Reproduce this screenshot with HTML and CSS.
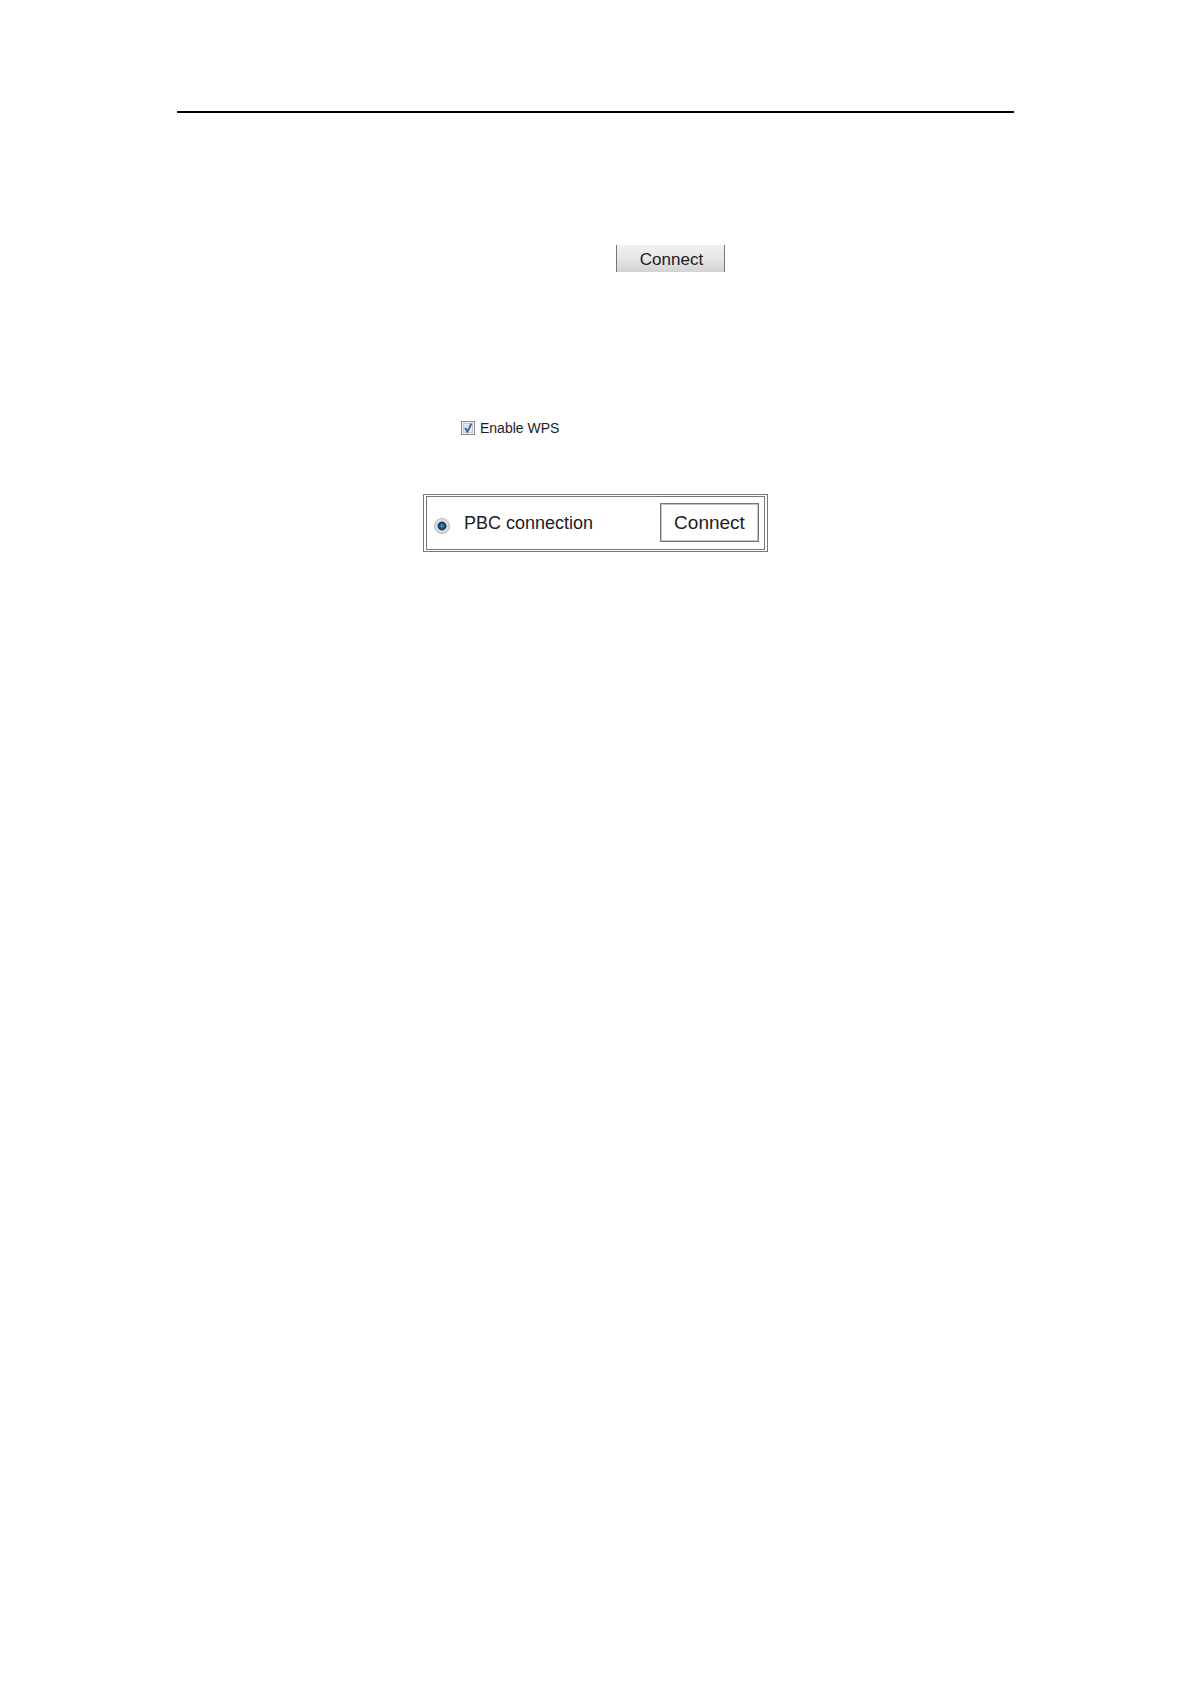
FILE: index.html
```html
<!DOCTYPE html>
<html lang="en">
<head>
    <meta charset="UTF-8">
    <meta name="viewport" content="width=device-width, initial-scale=1.0">
    <title>WPS</title>
    <link rel="stylesheet" href="styles.css">
</head>
<body>
    <main class="page">
        <hr class="rule">
        <form class="wps-form">
            <button type="button" class="btn btn-top">Connect</button>

            <div class="enable-row">
                <input type="checkbox" id="enableWps" class="check" checked>
                <label for="enableWps">Enable WPS</label>
            </div>

            <!-- PBC connection -->
            <div class="pbc-box">
                <input type="radio" id="pbc" name="mode" class="radio" checked>
                <label for="pbc">PBC connection</label>
                <button type="button" class="btn btn-pbc">Connect</button>
            </div>
        </form>
    </main>
</body>
</html>
```

FILE: styles.css
```css
* {
    box-sizing: border-box;
}
body {
    margin: 0;
    background: #fff;
    color: #1c1c24;
    font-family: "Liberation Sans", Arial, sans-serif;
}
.page {
    padding: 111px 177px;
}
.rule {
    height: 2px;
    margin: 0;
    border: none;
    background: #000;
}
.wps-form {
    display: flex;
    flex-direction: column;
    max-width: 345px;
    margin: 132px auto 0;
}
.btn {
    padding: 0;
    color: inherit;
    font-family: inherit;
    cursor: pointer;
}
.btn-top {
    width: 109px;
    height: 27px;
    margin-left: 193px;
    padding: 2px 0 0 2px;
    border: solid #777;
    border-width: 0 1px;
    background: linear-gradient(#f1f1f1, #e6e6e6 50%, #d2d2d2);
    font-size: 17px;
    line-height: 24px;
}
.enable-row {
    display: flex;
    align-items: center;
    gap: 5px;
    margin: 148px 0 58px 38px;
    font-size: 14px;
    line-height: 16px;
}
.check {
    appearance: none;
    width: 14px;
    height: 14px;
    margin: 0;
    border: 1px solid #8b8c90;
    background: #f0f1f4 url("data:image/svg+xml,%3Csvg xmlns='http://www.w3.org/2000/svg' viewBox='0 0 12 12'%3E%3Crect x='1.5' y='1.5' width='9' height='9' fill='%23dfe5ee' stroke='%23c3c8d0'/%3E%3Cpath d='M3 6l2.4 3.6L9.4 1.6' fill='none' stroke='%23445f9c' stroke-width='1.9'/%3E%3C/svg%3E") center / 12px 12px no-repeat;
}
.pbc-box {
    display: flex;
    align-items: center;
    height: 58px;
    padding: 0 5px 2px 7px;
    border: double #777;
    border-width: 3px 4px;
    font-size: 18px;
    line-height: 20px;
}
.pbc-box label {
    padding-top: 2px;
}
.radio {
    appearance: none;
    width: 16px;
    height: 16px;
    margin: 8px 14px 0 0;
    border: 1px solid #b4b4b4;
    border-radius: 50%;
    background: radial-gradient(circle, #5cb0d0 0, #1f5f88 2px, #163a57 4px, #f4f4f4 5px, #d4d4d4 6px, #e8e8e8 7px);
}
.btn-pbc {
    width: 99px;
    height: 39px;
    margin-left: auto;
    padding-top: 2px;
    border: 1px solid #777;
    outline: 1px solid #c4c4c4;
    outline-offset: -2px;
    background: #fff;
    font-size: 19px;
}
```
